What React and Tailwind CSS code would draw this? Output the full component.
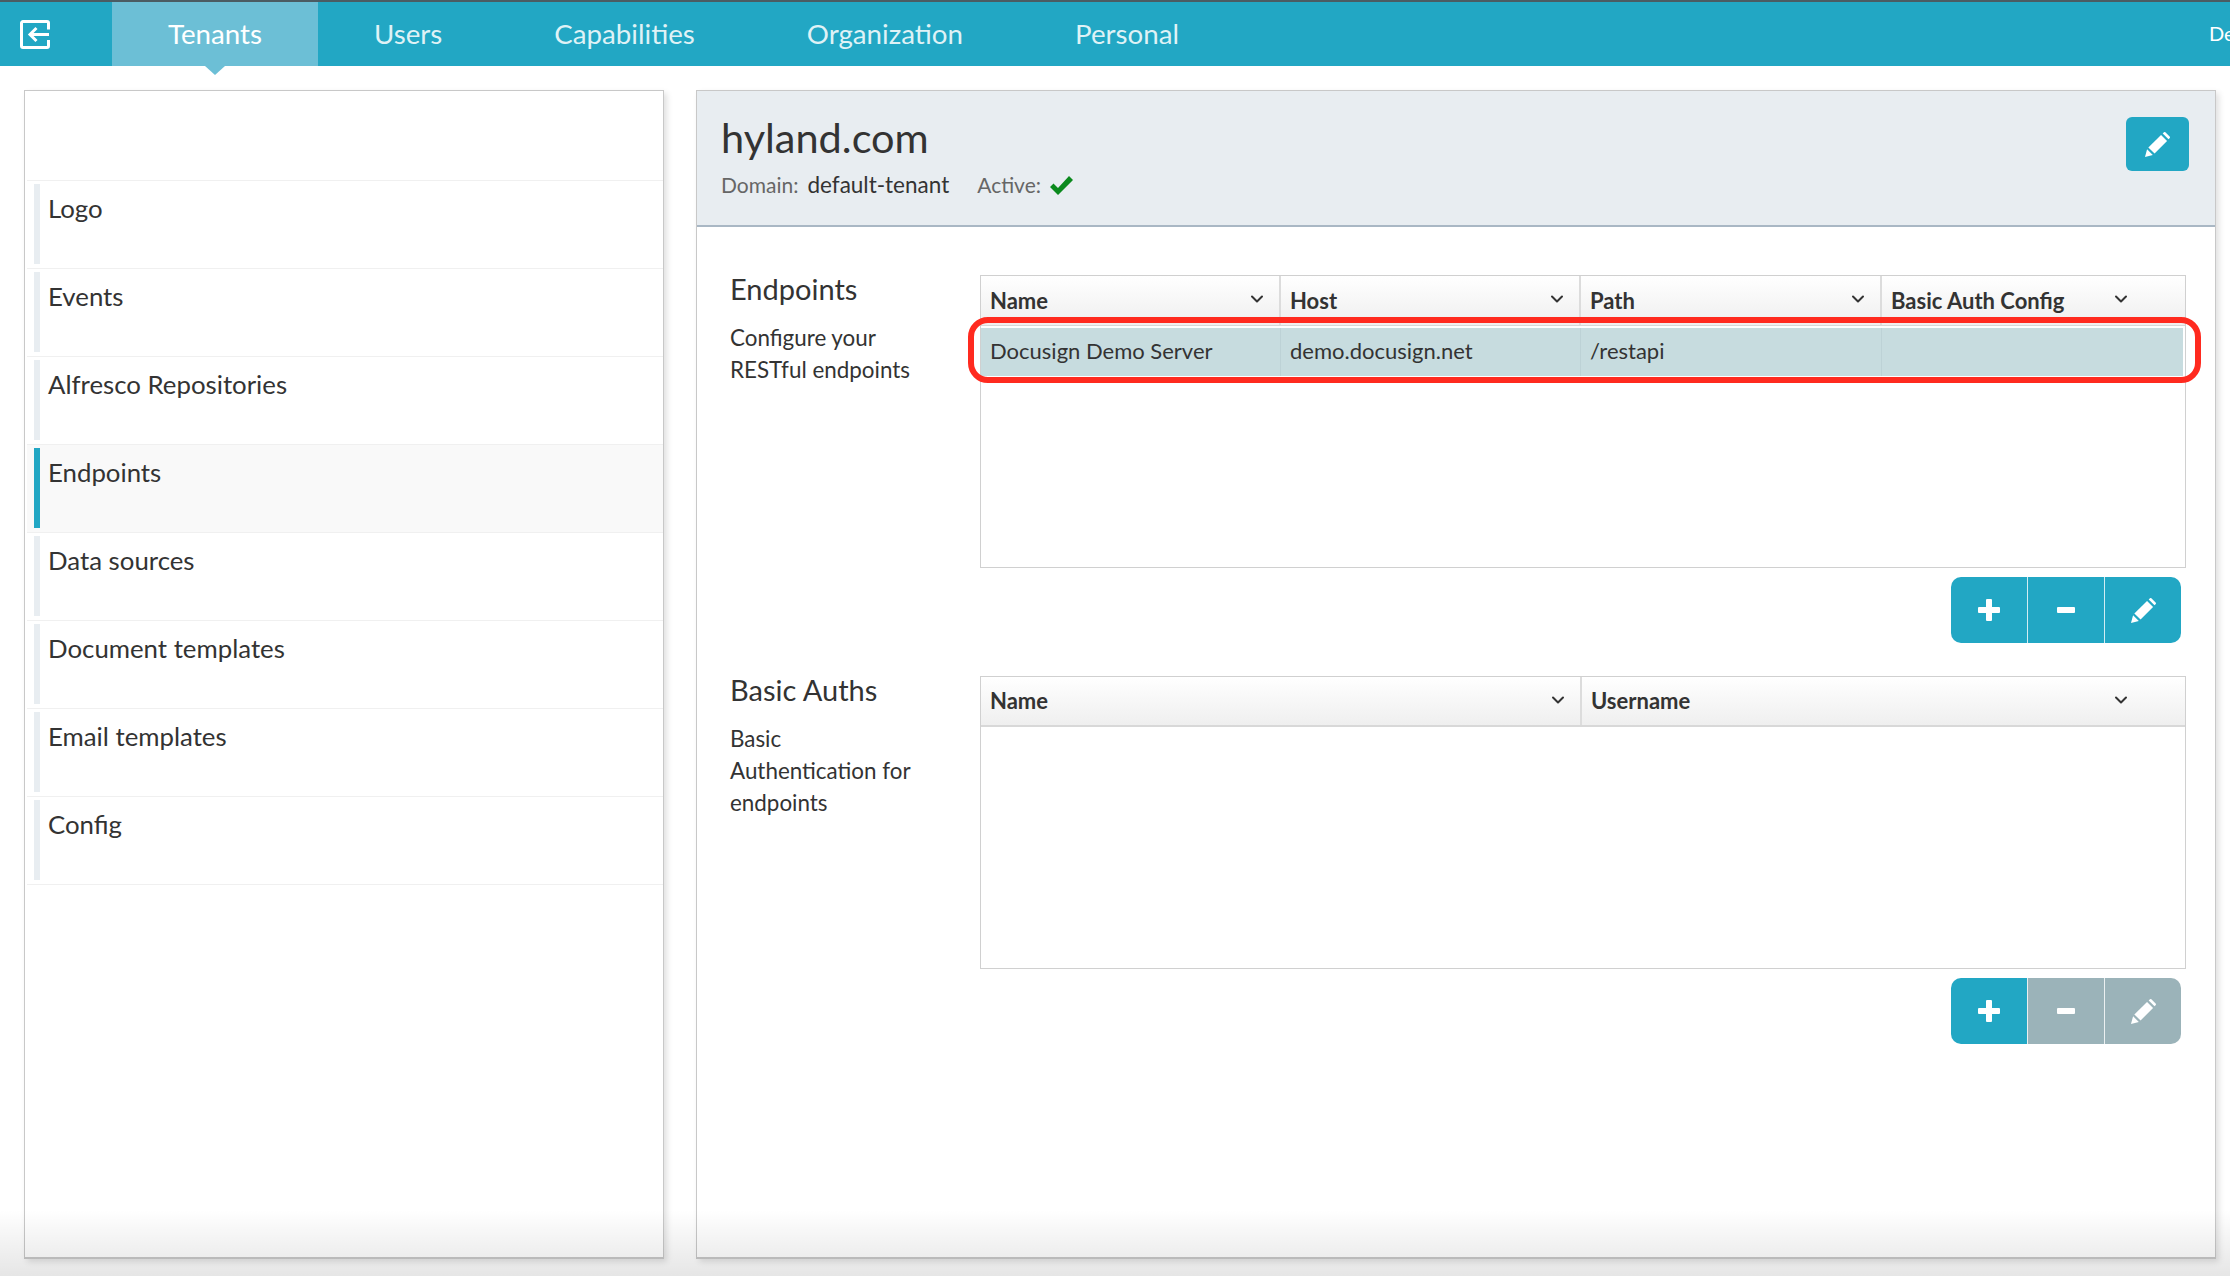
import { ChevronDown } from "lucide-react";

const sideItems = [
  "Logo",
  "Events",
  "Alfresco Repositories",
  "Endpoints",
  "Data sources",
  "Document templates",
  "Email templates",
  "Config",
];

const PencilIcon = ({ className }) => (
  <svg viewBox="0 0 24 24" className={className} fill="currentColor">
    <polygon points="0,24 2,16.5 7.5,22" />
    <polygon points="3.2,14.8 15.4,2.8 21.2,8.6 9.2,20.6" />
    <path d="M17 1.4 18 .4a1.3 1.3 0 0 1 1.8 0l3.8 3.8a1.3 1.3 0 0 1 0 1.8l-1 1z" />
  </svg>
);

const PlusIcon = () => (
  <svg viewBox="0 0 22 22" className="w-[22px] h-[22px]" fill="currentColor">
    <rect x="8" y="0" width="6" height="22" rx="1" />
    <rect x="0" y="8" width="22" height="6" rx="1" />
  </svg>
);

const MinusIcon = () => (
  <svg viewBox="0 0 18 6" className="w-[18px] h-[6px]" fill="currentColor">
    <rect width="18" height="6" rx="1" />
  </svg>
);

const HeaderCell = ({ label, className }) => (
  <div className={`flex items-center justify-between pl-[9px] pr-[12px] ${className}`}>
    <span className="text-[22px] font-bold text-[#333] -mt-[1px]">{label}</span>
    <ChevronDown size={20} strokeWidth={2.4} className="text-[#333] -mt-[3px]" />
  </div>
);

const ActionButtons = ({ disabled }) => {
  const second = disabled ? "bg-[#9bb3b9]" : "bg-[#22a7c4]";
  return (
    <div className="flex justify-end pr-[5px] mt-[9px] text-white">
      <div className="flex h-[66px] w-[230px] rounded-[10px] overflow-hidden">
        <button className="w-[76px] bg-[#22a7c4] flex items-center justify-center">
          <PlusIcon />
        </button>
        <button className={`w-[77px] border-l border-white/80 flex items-center justify-center ${second}`}>
          <MinusIcon />
        </button>
        <button className={`flex-1 border-l border-white/80 flex items-center justify-center ${second}`}>
          <PencilIcon className="w-[25px] h-[25px]" />
        </button>
      </div>
    </div>
  );
};

export default function App() {
  return (
    <div className="relative h-[1276px] w-[2230px] overflow-hidden bg-white font-['Lato',sans-serif] text-[#333]">
      {/* top nav */}
      <nav className="flex justify-between h-[66px] bg-[#22a7c4] border-t-2 border-[#4b5c63]">
        <div className="flex">
          <div className="w-[112px] flex items-center pl-[20px]">
            <svg viewBox="0 0 30 29" className="w-[30px] h-[29px] text-white" fill="none" stroke="currentColor" strokeWidth="3">
              <path d="M28.5 9.500V3a1.500 1.500 0 0 0-1.500-1.500H3A1.500 1.500 0 0 0 1.500 3v23A1.500 1.500 0 0 0 3 27.500h24a1.500 1.500 0 0 0 1.500-1.500v-6" />
              <path d="M29 14.500H10M16.500 8l-6.500 6.500 6.500 6.500" />
            </svg>
          </div>
          <div className="relative px-14 bg-[#6cbfd6] text-white text-[27.7px] leading-[63px]">
            Tenants
            <div className="absolute left-1/2 -translate-x-1/2 top-full w-0 h-0 border-x-[10px] border-x-transparent border-t-[9px] border-t-[#6cbfd6]" />
          </div>
          {["Users", "Capabilities", "Organization", "Personal"].map((t) => (
            <div key={t} className="px-14 text-[#dff2f6] text-[27.7px] leading-[63px]">
              {t}
            </div>
          ))}
        </div>
        <div className="w-[21px] overflow-hidden whitespace-nowrap text-white text-[20px] leading-[62px]">De</div>
      </nav>

      <div className="flex gap-[32px] pl-[24px] pt-[24px]">
        {/* side list */}
        <aside className="w-[640px] h-[1169px] bg-white border border-b-2 border-[#c8c8c8] shadow-[3px_3px_6px_rgba(0,0,0,0.12)] pt-[89px] pl-[2px]">
          {sideItems.map((item) => {
            const active = item === "Endpoints";
            return (
              <div
                key={item}
                className={`h-[88px] border-t border-[#f0f0f0] pl-[7px] pt-[3px] flex gap-[8px] ${active ? "bg-[#f9f9f9]" : ""}`}
              >
                <div className={`w-[6px] h-[80px] ${active ? "bg-[#22a7c4]" : "bg-[#e8edf1]"}`} />
                <div className="text-[25.8px] leading-[34px] pt-[7px]">{item}</div>
              </div>
            );
          })}
          <div className="border-t border-[#f0f0f0]" />
        </aside>

        {/* detail */}
        <main className="w-[1520px] h-[1169px] bg-white border border-b-2 border-[#c8c8c8] shadow-[3px_3px_6px_rgba(0,0,0,0.12)]">
          <header className="flex justify-between h-[136px] bg-[#e8edf1] border-b-2 border-[#a9b7c4] pl-[24px] pr-[26px]">
            <div>
              <h1 className="text-[41.5px] leading-[56px] mt-[18px] text-[#333]">hyland.com</h1>
              <div className="flex items-center text-[21px] leading-[32px] mt-[4px]">
                <span className="text-[#666]">Domain:</span>
                <span className="ml-[9px] text-[22.5px]">default-tenant</span>
                <span className="ml-[28px] text-[#666]">Active:</span>
                <svg viewBox="0 0 23 19" className="ml-[9px] w-[23px] h-[19px] text-[#0b8a1e]" fill="currentColor">
                  <polygon points="0,11 3.500,7.500 8,12 19,0 23,4 8,19" />
                </svg>
              </div>
            </div>
            <button className="mt-[26px] w-[63px] h-[54px] rounded-[6px] bg-[#22a7c4] text-white flex items-center justify-center">
              <PencilIcon className="w-[25px] h-[25px]" />
            </button>
          </header>

          <div className="pl-[33px] pr-[29px] pt-[48px]">
            {/* endpoints */}
            <section className="flex">
              <div className="w-[250px] shrink-0">
                <h2 className="text-[29px] leading-[36px] -mt-[4px]">Endpoints</h2>
                <p className="text-[22.4px] leading-[32px] mt-[15px]">
                  Configure your
                  <br />
                  RESTful endpoints
                </p>
              </div>
              <div className="flex-1">
                <div className="h-[293px] border border-[#d0d0d0] relative">
                  <div className="flex h-[50px] bg-gradient-to-b from-white to-[#efefef] border-b border-[#d8d8d8]">
                    <HeaderCell label="Name" className="w-[300px] border-r-2 border-[#dcdcdc]" />
                    <HeaderCell label="Host" className="w-[300px] border-r-2 border-[#dcdcdc]" />
                    <HeaderCell label="Path" className="w-[301px] border-r-2 border-[#dcdcdc]" />
                    <HeaderCell label="Basic Auth Config" className="w-[261px]" />
                  </div>
                  <div className="flex h-[48px] mt-[2px] mr-[2px] bg-[#c7dcdf] text-[22px] leading-[46px]">
                    <div className="w-[300px] pl-[9px] border-r border-[#bdd2d6]">Docusign Demo Server</div>
                    <div className="w-[300px] pl-[9px] border-r border-[#bdd2d6]">demo.docusign.net</div>
                    <div className="w-[301px] pl-[9px] border-r border-[#bdd2d6]">/restapi</div>
                    <div className="flex-1" />
                  </div>
                  {/* red annotation round the selected row */}
                  <div className="absolute -left-[13px] -right-[16px] top-[41px] h-[66px] border-[6px] border-[#ff2a1f] rounded-[20px]" />
                </div>
                <ActionButtons />
              </div>
            </section>

            {/* basic auths */}
            <section className="flex mt-[33px]">
              <div className="w-[250px] shrink-0">
                <h2 className="text-[29px] leading-[36px] -mt-[4px]">Basic Auths</h2>
                <p className="text-[22.4px] leading-[32px] mt-[15px]">
                  Basic
                  <br />
                  Authentication for
                  <br />
                  endpoints
                </p>
              </div>
              <div className="flex-1">
                <div className="h-[293px] border border-[#d0d0d0]">
                  <div className="flex h-[50px] bg-gradient-to-b from-white to-[#efefef] border-b-2 border-[#d8d8d8]">
                    <HeaderCell label="Name" className="w-[601px] border-r-2 border-[#dcdcdc]" />
                    <HeaderCell label="Username" className="w-[561px]" />
                  </div>
                </div>
                <ActionButtons disabled />
              </div>
            </section>
          </div>
        </main>
      </div>

      {/* fade at the bottom of the page, it lies over the panels */}
      <div className="absolute inset-x-0 bottom-0 h-[66px] pointer-events-none bg-gradient-to-b from-transparent to-black/10" />
    </div>
  );
}
